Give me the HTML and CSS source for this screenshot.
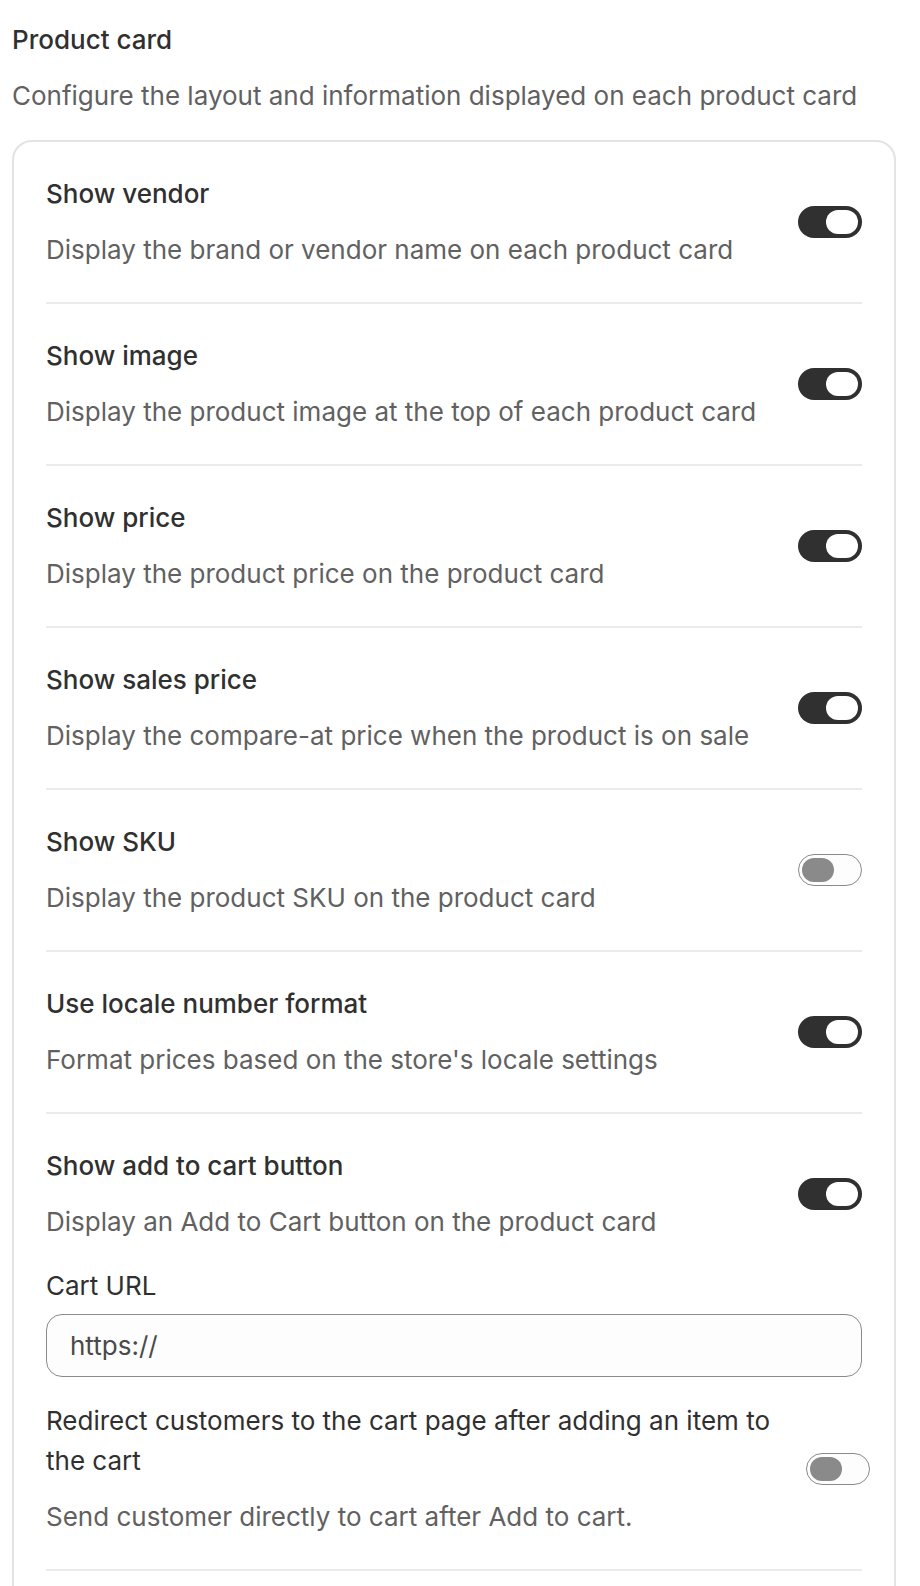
FILE: index.html
```html
<!DOCTYPE html>
<html lang="en">

<head>
    <meta charset="UTF-8">
    <meta name="viewport" content="width=device-width, initial-scale=1.0">
    <title>Product card settings</title>
    <link rel="stylesheet" href="styles.css">
</head>

<body>
    <h2 class="section-title">Product card</h2>
    <p class="section-subtitle">Configure the layout and information displayed on each product card</p>

    <div class="card">
        <div class="row">
            <div class="setting">
                <div class="setting-text">
                    <div class="setting-title">Show vendor</div>
                    <div class="setting-desc">Display the brand or vendor name on each product card</div>
                </div>
                <span class="toggle on"><span class="knob"></span></span>
            </div>
        </div>

        <div class="row">
            <div class="setting">
                <div class="setting-text">
                    <div class="setting-title">Show image</div>
                    <div class="setting-desc">Display the product image at the top of each product card</div>
                </div>
                <span class="toggle on"><span class="knob"></span></span>
            </div>
        </div>

        <div class="row">
            <div class="setting">
                <div class="setting-text">
                    <div class="setting-title">Show price</div>
                    <div class="setting-desc">Display the product price on the product card</div>
                </div>
                <span class="toggle on"><span class="knob"></span></span>
            </div>
        </div>

        <div class="row">
            <div class="setting">
                <div class="setting-text">
                    <div class="setting-title">Show sales price</div>
                    <div class="setting-desc">Display the compare-at price when the product is on sale</div>
                </div>
                <span class="toggle on"><span class="knob"></span></span>
            </div>
        </div>

        <div class="row">
            <div class="setting">
                <div class="setting-text">
                    <div class="setting-title">Show SKU</div>
                    <div class="setting-desc">Display the product SKU on the product card</div>
                </div>
                <span class="toggle off"><span class="knob"></span></span>
            </div>
        </div>

        <div class="row">
            <div class="setting">
                <div class="setting-text">
                    <div class="setting-title">Use locale number format</div>
                    <div class="setting-desc">Format prices based on the store's locale settings</div>
                </div>
                <span class="toggle on"><span class="knob"></span></span>
            </div>
        </div>

        <div class="row">
            <div class="setting">
                <div class="setting-text">
                    <div class="setting-title">Show add to cart button</div>
                    <div class="setting-desc">Display an Add to Cart button on the product card</div>
                </div>
                <span class="toggle on"><span class="knob"></span></span>
            </div>

            <div class="field">
                <label class="field-label" for="cartUrl">Cart URL</label>
                <input class="field-input" type="text" id="cartUrl" value="https://">
            </div>

            <div class="setting sub">
                <div class="setting-text">
                    <div class="setting-label">Redirect customers to the cart page after adding an item to the cart</div>
                    <div class="setting-desc">Send customer directly to cart after Add to cart.</div>
                </div>
                <span class="toggle off"><span class="knob"></span></span>
            </div>
        </div>
    </div>
</body>

</html>
```

FILE: styles.css
```css
body {
    margin: 0;
    padding: 20px 24px 0 12px;
    font-family: Inter, "Noto Sans", sans-serif;
    font-size: 26px;
    line-height: 40px;
    color: #303030;
    background: #fff;
}

.section-title {
    margin: 0;
    font-size: 26px;
    font-weight: 550;
    line-height: 40px;
}

.section-subtitle {
    margin: 16px 0 0;
    color: #616161;
}

.card {
    margin-top: 24px;
    border: 2px solid #e3e3e3;
    border-radius: 20px;
    padding: 0 32px 32px;
}

.row {
    display: flex;
    flex-direction: column;
    gap: 24px;
    padding: 32px 0;
    border-bottom: 2px solid #ebebeb;
}

.setting {
    display: flex;
    align-items: center;
    justify-content: space-between;
    gap: 24px;
}

.setting.sub {
    margin-right: -8px;
}

.setting-text {
    display: flex;
    flex-direction: column;
    gap: 16px;
}

.setting-title {
    font-weight: 550;
}

.setting-desc {
    color: #616161;
}

.field {
    display: flex;
    flex-direction: column;
    gap: 8px;
}

.field-input {
    height: 63px;
    box-sizing: border-box;
    border: 1.5px solid #8a8a8a;
    border-radius: 16px;
    background: #fdfdfd;
    padding: 0 23px;
    font-family: Inter, "Noto Sans", sans-serif;
    font-size: 26px;
    color: #4a4a4a;
    outline: none;
}

.toggle {
    flex: none;
    width: 64px;
    height: 32px;
    box-sizing: border-box;
    border-radius: 16px;
    display: flex;
    align-items: center;
}

.toggle.on {
    background: #303030;
    justify-content: flex-end;
    padding: 0 4px;
}

.toggle.off {
    background: #fdfdfd;
    border: 1.5px solid #8a8a8a;
    padding: 0 3px;
}

.knob {
    width: 32px;
    height: 24px;
    border-radius: 12px;
}

.toggle.on .knob {
    background: #fff;
}

.toggle.off .knob {
    background: #8a8a8a;
}
```
